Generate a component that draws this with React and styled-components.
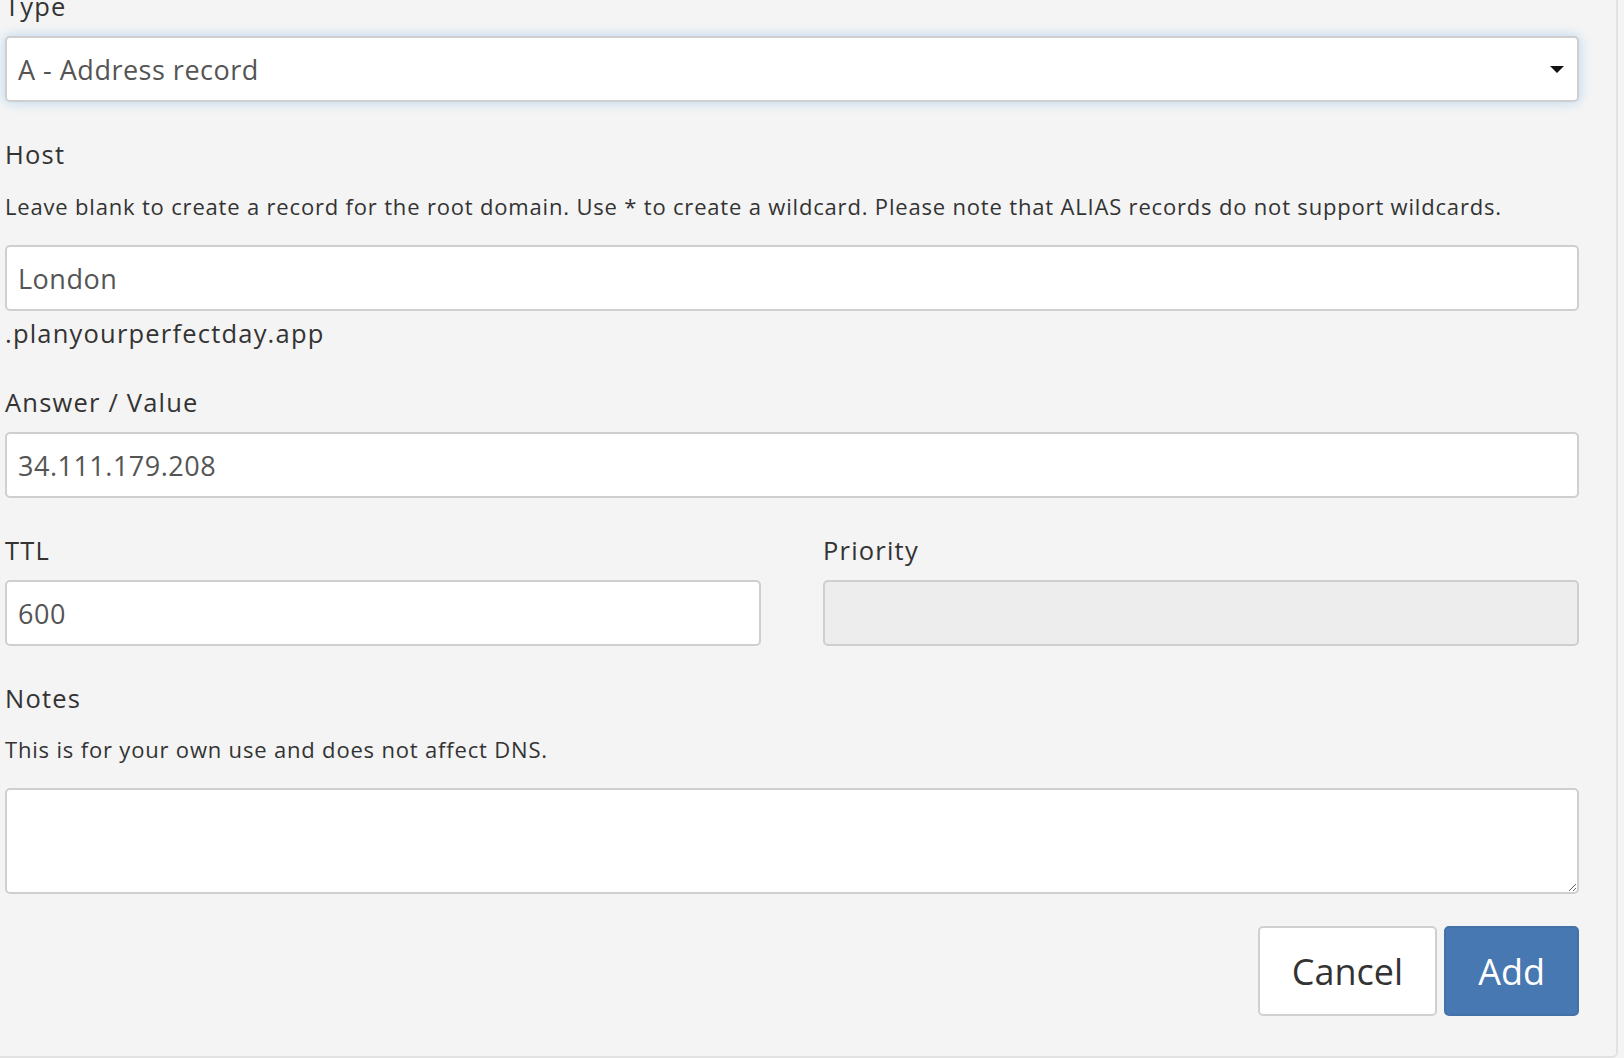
import React from "react";
import styled, { createGlobalStyle } from "styled-components";

const GlobalStyle = createGlobalStyle`
  html, body {
    margin: 0;
    padding: 0;
    background: #f4f4f4;
    overflow: hidden;
  }
  body {
    font-family: "Open Sans", "Liberation Sans", sans-serif;
    color: #333;
  }
`;

const Page = styled.div`
  padding: 0 6px 0 0;
`;

const Panel = styled.div`
  margin-top: -11px;
  padding: 0 37px 40px 5px;
  background: #f4f4f4;
  border-right: 2px solid #e2e2e2;
  border-bottom: 2px solid #e2e2e2;
  border-bottom-right-radius: 6px;
`;

const Group = styled.div`
  margin-bottom: ${(p) => p.$after ?? 35}px;
`;

const Label = styled.div`
  font-size: 25.5px;
  letter-spacing: 1.2px;
  line-height: 34px;
  color: #333;
  margin-bottom: ${(p) => p.$gap ?? 13}px;
`;

const Help = styled.div`
  font-size: 22px;
  letter-spacing: 0.82px;
  line-height: 30px;
  color: #333;
  margin-bottom: 24px;
`;

const Suffix = styled.div`
  font-size: 25.5px;
  letter-spacing: 1.2px;
  line-height: 34px;
  color: #333;
  margin-top: 5px;
`;

const fieldBase = `
  display: block;
  box-sizing: border-box;
  width: 100%;
  border: 2px solid #cfcfcf;
  border-radius: 5px;
  font-family: "Open Sans", "Liberation Sans", sans-serif;
  font-size: 27px;
  letter-spacing: 0.5px;
  color: #555;
  padding: 0 11px;
  outline: none;
`;

const Input = styled.input`
  ${fieldBase}
  height: 66px;
  background: ${(p) => (p.disabled ? "#ededed" : "#fff")};
`;

const SelectWrap = styled.div`
  position: relative;
`;

const Select = styled.select`
  ${fieldBase}
  height: 66px;
  background: #fff;
  appearance: none;
  -webkit-appearance: none;
  box-shadow: 0 0 12px rgba(102, 175, 233, 0.45);
`;

const Caret = styled.span`
  position: absolute;
  right: 15px;
  top: 30px;
  width: 0;
  height: 0;
  border-left: 7px solid transparent;
  border-right: 7px solid transparent;
  border-top: 7px solid #111;
  pointer-events: none;
`;

const TextArea = styled.textarea`
  ${fieldBase}
  height: 106px;
  background: #fff;
  padding: 10px 11px;
  resize: vertical;
`;

const Columns = styled.div`
  display: grid;
  grid-template-columns: 1fr 1fr;
  column-gap: 62px;
`;

const Actions = styled.div`
  display: flex;
  justify-content: flex-end;
  gap: 7px;
  margin-top: 32px;
`;

const Button = styled.button`
  height: 90px;
  padding: 0 32px;
  border-radius: 5px;
  font-family: "Open Sans", "Liberation Sans", sans-serif;
  font-size: 36px;
  cursor: pointer;
  border: 2px solid ${(p) => (p.$primary ? "#4272a8" : "#d0d0d0")};
  background: ${(p) => (p.$primary ? "#4778b1" : "#fff")};
  color: ${(p) => (p.$primary ? "#fff" : "#333")};
`;

export default function App() {
  return (
    <Page>
      <GlobalStyle />
      <Panel>
        <Group>
          <Label>Type</Label>
          <SelectWrap>
            <Select defaultValue="A">
              <option value="A">A - Address record</option>
              <option value="CNAME">CNAME - Canonical name</option>
            </Select>
            <Caret />
          </SelectWrap>
        </Group>

        <Group>
          <Label $gap={20}>Host</Label>
          <Help>
            Leave blank to create a record for the root domain. Use * to create
            a wildcard. Please note that ALIAS records do not support wildcards.
          </Help>
          <Input value="London" readOnly />
          <Suffix>.planyourperfectday.app</Suffix>
        </Group>

        <Group>
          <Label>Answer / Value</Label>
          <Input value="34.111.179.208" readOnly />
        </Group>

        <Columns>
          <Group>
            <Label>TTL</Label>
            <Input value="600" readOnly />
          </Group>
          <Group>
            <Label>Priority</Label>
            <Input disabled />
          </Group>
        </Columns>

        <Group $after={0}>
          <Label $gap={19}>Notes</Label>
          <Help>This is for your own use and does not affect DNS.</Help>
          <TextArea />
        </Group>

        <Actions>
          <Button>Cancel</Button>
          <Button $primary>Add</Button>
        </Actions>
      </Panel>
    </Page>
  );
}
